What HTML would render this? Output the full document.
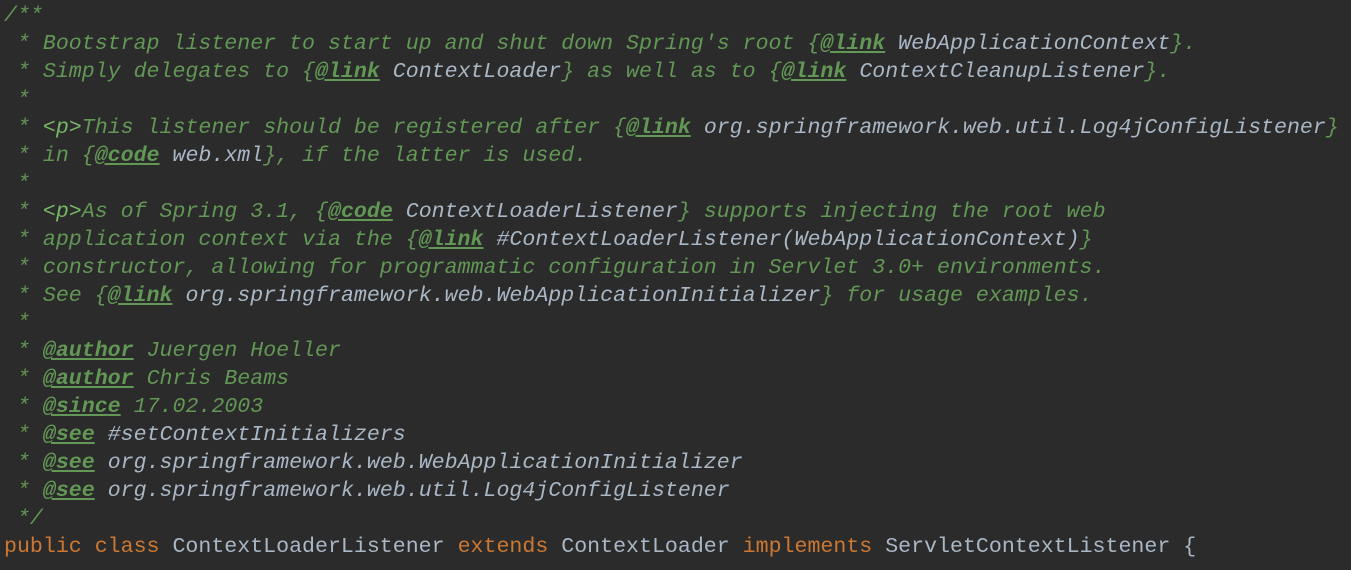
<!DOCTYPE html>
<html><head><meta charset="utf-8"><style>
html,body{margin:0;padding:0;background:#2b2b2b;width:1351px;height:570px;overflow:hidden}
pre{margin:0;padding:0 0 0 4px;font-family:"Liberation Mono",monospace;font-size:21.6px;line-height:27.95px;color:#629755;font-style:italic;position:relative;top:3px}
.t{font-weight:bold;text-decoration:underline}
.r{color:#a9b7c6}
.p{color:#77b767}
.c{font-style:normal;color:#a9b7c6}
.k{color:#cc7832}
</style></head><body><pre>/**
 * Bootstrap listener to start up and shut down Spring's root {<span class="t">@link</span> <span class="r">WebApplicationContext</span>}.
 * Simply delegates to {<span class="t">@link</span> <span class="r">ContextLoader</span>} as well as to {<span class="t">@link</span> <span class="r">ContextCleanupListener</span>}.
 *
 * <span class="p">&lt;p&gt;</span>This listener should be registered after {<span class="t">@link</span> <span class="r">org.springframework.web.util.Log4jConfigListener</span>}
 * in {<span class="t">@code</span> <span class="r">web.xml</span>}, if the latter is used.
 *
 * <span class="p">&lt;p&gt;</span>As of Spring 3.1, {<span class="t">@code</span> <span class="r">ContextLoaderListener</span>} supports injecting the root web
 * application context via the {<span class="t">@link</span> <span class="r">#ContextLoaderListener(WebApplicationContext)</span>}
 * constructor, allowing for programmatic configuration in Servlet 3.0+ environments.
 * See {<span class="t">@link</span> <span class="r">org.springframework.web.WebApplicationInitializer</span>} for usage examples.
 *
 * <span class="t">@author</span> Juergen Hoeller
 * <span class="t">@author</span> Chris Beams
 * <span class="t">@since</span> 17.02.2003
 * <span class="t">@see</span> <span class="r">#setContextInitializers</span>
 * <span class="t">@see</span> <span class="r">org.springframework.web.WebApplicationInitializer</span>
 * <span class="t">@see</span> <span class="r">org.springframework.web.util.Log4jConfigListener</span>
 */
<span class="c"><span class="k">public class</span> ContextLoaderListener <span class="k">extends</span> ContextLoader <span class="k">implements</span> ServletContextListener {</span></pre></body></html>
